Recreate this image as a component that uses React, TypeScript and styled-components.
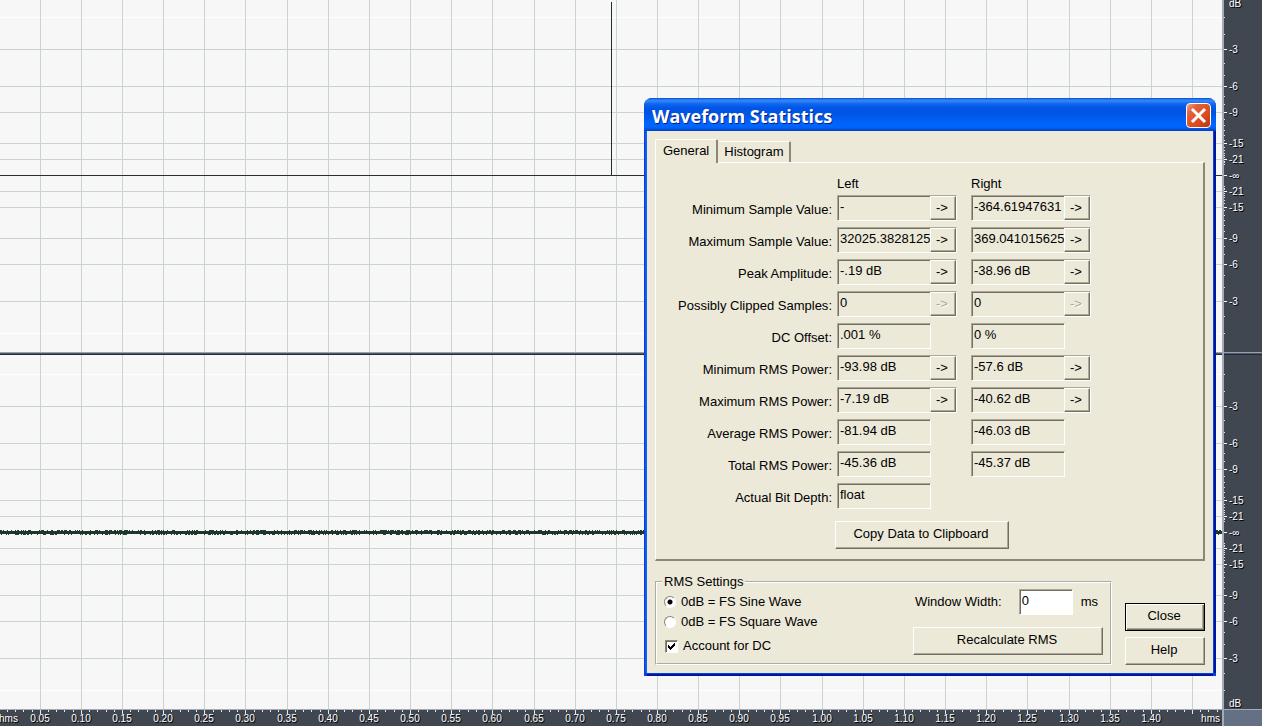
import React, { useEffect, useState } from "react";
import styled, { createGlobalStyle, css } from "styled-components";

const GlobalStyle = createGlobalStyle`
  * { box-sizing: border-box; }
  body {
    margin: 0;
    background: #f7f7f7;
    color: #000;
    font: 13px/16px "Liberation Sans", Arial, sans-serif;
  }
  button, input { font: inherit; color: inherit; }
`;

/* ---------- Editor behind the dialog ---------- */

const Editor = styled.main`
  position: relative;
  display: grid;
  grid-template-columns: minmax(0, 1fr) 40px;
  grid-template-rows: minmax(0, 1fr) 17px;
  min-height: 100vh;
  overflow: hidden;
`;

const Tracks = styled.div`
  display: flex;
  flex-direction: column;
`;

const Scales = styled(Tracks)`
  background: #404750;
  border-left: 2px solid #a4abb6;
`;

const TrackSplitter = styled.div`
  flex: none;
  height: 3px;
  background: #4f5a6c;
  border-top: 1px solid #98a1b0;
  border-bottom: 1px solid #262b33;
`;

const TrackDrawing = styled.svg<{ $tall?: boolean }>`
  display: block;
  width: 100%;
  flex: 1 1 ${(p) => (p.$tall ? 354 : 352)}px;
  min-height: 0;
  overflow: hidden;
`;

const TimeRuler = styled.svg`
  display: block;
  width: 100%;
  height: 17px;
  background: #404750;
  border-top: 1px solid #a4abb6;
`;

const Corner = styled.div`
  background: #667084;
  border: solid #a4abb6;
  border-width: 1px 0 0 2px;
`;

const ScaleText = styled.text`
  font: 10px "Liberation Sans", Arial, sans-serif;
  fill: #fff;
  text-shadow: 1px 1px 0 #000;
`;

const FULL_SCALE = 177.4;
const TIME_STEP = 41.151;
const TIME_START = -0.92;
const SCALE_WIDTH = 40;
const MAJOR_DB = [3, 6, 9, 15, 21];
const offsetOf = (db: number) => Math.round(FULL_SCALE * Math.pow(10, -db / 20));
const timeX = (n: number) => Math.floor(TIME_START + n * TIME_STEP);
const range = (n: number) => Array.from({ length: n }, (_, i) => i);

const useTrackWidth = () => {
  const [width, setWidth] = useState(window.innerWidth - SCALE_WIDTH);
  useEffect(() => {
    const update = () => setWidth(window.innerWidth - SCALE_WIDTH);
    window.addEventListener("resize", update);
    return () => window.removeEventListener("resize", update);
  }, []);
  return width;
};

const noisePath = (centre: number, width: number) => {
  let seed = 7;
  const next = () => (seed = (seed * 16807) % 2147483647) / 2147483647;
  return range(width)
    .map((x) => {
      const up = next() < 0.45 ? 2 : 1;
      const down = next() < 0.35 ? 3 : 2;
      return `M${x + 0.5} ${centre - up}V${centre + down}`;
    })
    .join("");
};

function Track({ centre, width, lower }: { centre: number; width: number; lower?: boolean }) {
  return (
    <TrackDrawing $tall={lower} aria-hidden="true" shapeRendering="crispEdges">
      {[1, -1].map((s) => (
        <rect key={s} x="0" y={centre - s * offsetOf(1)} width="100%" height="1" fill="#fff" />
      ))}
      {range(Math.floor(width / TIME_STEP)).map((n) => (
        <rect key={n} x={timeX(n + 1)} y="0" width="1" height="100%" fill="#c9d4ca" />
      ))}
      {MAJOR_DB.flatMap((db) => [-offsetOf(db), offsetOf(db)]).map((o) => (
        <rect key={o} x="0" y={centre + o} width="100%" height="1" fill="#c9d4ca" />
      ))}
      {lower ? (
        <>
          <path d={noisePath(centre, width)} stroke="#1b4230" />
          <rect x="0" y={centre - 1} width="100%" height="3" fill="#22352a" />
        </>
      ) : (
        <>
          <rect x="0" y={centre} width="100%" height="1" fill="#2c302a" />
          <rect x="611" y="2" width="1" height={centre - 2} fill="#1d2e2a" />
        </>
      )}
    </TrackDrawing>
  );
}

function Scale({ centre, lower }: { centre: number; lower?: boolean }) {
  return (
    <TrackDrawing $tall={lower} shapeRendering="crispEdges">
      {range(24).flatMap((i) =>
        [-1, 1].map((s) => (
          <rect key={`${i}${s}`} x="0" y={centre + s * offsetOf(i + 1)} width="1" height="1" fill="#e4e6ea" />
        ))
      )}
      {MAJOR_DB.flatMap((db) =>
        [-1, 1].map((s) => (
          <g key={`${db}${s}`}>
            <rect x="0" y={centre + s * offsetOf(db)} width="3" height="1" fill="#fff" />
            <ScaleText x="5" y={centre + s * offsetOf(db) + 4}>{`-${db}`}</ScaleText>
          </g>
        ))
      )}
      <rect x="0" y={centre} width="3" height="1" fill="#fff" />
      <ScaleText x="5" y={centre + 4}>-∞</ScaleText>
      <ScaleText x="5" y={lower ? 352 : 7}>dB</ScaleText>
    </TrackDrawing>
  );
}

function Ruler({ width }: { width: number }) {
  return (
    <TimeRuler shapeRendering="crispEdges">
      {range(Math.floor((width * 5) / TIME_STEP) + 1).map((i) => (
        <rect key={i} x={timeX(i / 5)} y="0" width="1" height={i % 5 ? 2 : 4} fill="#e8eaee" />
      ))}
      {range(Math.floor((width - SCALE_WIDTH) / TIME_STEP)).map((n) => (
        <ScaleText key={n} x={timeX(n + 1)} y="12" textAnchor="middle">
          {((n + 1) * 0.05).toFixed(2)}
        </ScaleText>
      ))}
      <ScaleText x="-1" y="12">hms</ScaleText>
      <ScaleText x="100%" dx="-2" y="12" textAnchor="end">hms</ScaleText>
    </TimeRuler>
  );
}

/* ---------- Dialog ---------- */

const Dialog = styled.section`
  position: absolute;
  left: 644px;
  top: 98px;
  width: 572px;
  background: #0a3fe0;
  border-radius: 8px 8px 0 0;
  overflow: hidden;
`;

const TitleBar = styled.header`
  display: flex;
  align-items: center;
  justify-content: space-between;
  height: 33px;
  padding: 2px 5px 0 8px;
  background: linear-gradient(
    #0a4ad0 0, #2f86fa 2px, #2f86fa 3px, #0f66ee 6px, #0055e6 10px,
    #0054e3 15px, #0062fa 24px, #0066ff 29px, #005cf0 30px, #0040c4 33px
  );
`;

const Title = styled.h1`
  margin: 0;
  color: #fff;
  font: bold 18px/24px "Open Sans", "Trebuchet MS", sans-serif;
  text-shadow: 1px 1px 0 #0b1f86;
`;

const CloseBox = styled.button`
  display: grid;
  place-items: center;
  width: 25px;
  height: 25px;
  padding: 0;
  border: 1px solid #fff;
  border-radius: 4px;
  background: linear-gradient(135deg, #f0a088 0, #e2603c 25%, #dd4a1e 65%, #b83410 100%);
`;

const DialogBody = styled.div`
  margin: 0 3px 3px;
  padding: 8px;
  background: #ece9d8;
  box-shadow: -1px 0 0 #1560f0, -2px 0 0 #0a58f0, 1px 0 0 #0a3fe0, 3px 0 0 #0016a0,
    0 1px 0 #0a3fe0, 0 3px 0 #0016a0;
`;

const TabList = styled.div`
  display: flex;
  align-items: flex-end;
  height: 23px;
`;

const Tab = styled.button<{ $active: boolean }>`
  height: 21px;
  padding: 0 5px;
  border: solid;
  border-width: 1px 2px 0 1px;
  border-color: #fff #8a8778 #fff #fff;
  border-radius: 2px 2px 0 0;
  background: #ece9d8;
  ${(p) =>
    p.$active
      ? css`
          position: relative;
          height: 24px;
          margin-bottom: -1px;
          padding: 0 7px 2px;
        `
      : css`
          border-left-color: #ece9d8;
        `}
`;

const Panel = styled.div`
  padding: 12px 0 10px;
  border: solid;
  border-width: 1px 2px 2px 1px;
  border-color: #fff #8a8778 #8a8778 #fff;
`;

const StatsTable = styled.table`
  border-collapse: collapse;

  th, td {
    padding: 0 0 6px;
    vertical-align: top;
    font-weight: normal;
    text-align: left;
  }
  thead th { padding: 1px 0 3px; }
`;

const RowHead = styled.th`
  width: 181px;
  && {
    padding: 7px 5px 0 0;
    text-align: right;
  }
`;

const StatCell = styled.td`
  width: 134px;
`;

const SunkenFrame = styled.div`
  display: inline-flex;
  height: 26px;
  vertical-align: top;
  border: 1px solid;
  border-color: #aca899 #fff #fff #aca899;
`;

const ValueBox = styled.input<{ $editable?: boolean }>`
  width: ${(p) => (p.$editable ? 52 : 92)}px;
  height: 24px;
  padding: 0 0 4px 1px;
  border: solid #716f64;
  border-width: 1px 0 0 1px;
  border-radius: 0;
  background: ${(p) => (p.$editable ? "#fff" : "#ece9d8")};
  outline: none;
`;

const PushButton = styled.button<{ $width: number; $default?: boolean }>`
  width: ${(p) => p.$width}px;
  height: 28px;
  padding: 0 2px 2px 0;
  border: 1px solid;
  border-color: #fff #716f64 #716f64 #fff;
  background: #ece9d8;
  box-shadow: inset -1px -1px 0 #aca899;
  ${(p) =>
    p.$default &&
    css`
      border-color: #000;
      box-shadow: inset 1px 1px 0 #fff, inset -1px -1px 0 #716f64, inset -2px -2px 0 #aca899;
    `}
`;

const JumpButton = styled(PushButton)`
  height: 24px;
  padding-bottom: 0;
  &:disabled {
    color: #aca899;
    text-shadow: 1px 1px 0 #fff;
  }
`;

const CopyRow = styled.div`
  margin: 6px 0 0 179px;
`;

const Footer = styled.div`
  display: flex;
  justify-content: space-between;
  align-items: flex-end;
  margin-top: 14px;
`;

const Settings = styled.fieldset`
  display: flex;
  justify-content: space-between;
  width: 457px;
  height: 90px;
  margin: 0;
  padding: 0 7px;
  border: 2px groove #fff;

  legend {
    margin-left: -2px;
    padding: 0 2px;
    line-height: 14px;
  }
`;

const Choices = styled.div`
  display: flex;
  flex-direction: column;
  gap: 4px;
  padding-top: 5px;
`;

const Choice = styled.label`
  display: flex;
  align-items: center;
  gap: 5px;
  height: 16px;
`;

const CheckChoice = styled(Choice)`
  margin-top: 4px;
  padding-left: 1px;
`;

const Radio = styled.input`
  appearance: none;
  width: 12px;
  height: 12px;
  margin: 0;
  border: 1px solid;
  border-color: #8a8778 #fff #fff #8a8778;
  border-radius: 50%;
  background: #fff;
  &:checked { background: radial-gradient(circle, #000 2px, #fff 3px); }
`;

const CheckHolder = styled.span`
  display: grid;
  > * { grid-area: 1 / 1; }
  svg { visibility: hidden; pointer-events: none; }
  input:checked + svg { visibility: visible; }
`;

const CheckBox = styled.input`
  appearance: none;
  width: 13px;
  height: 13px;
  margin: 0;
  border: 1px solid;
  border-color: #8a8778 #fff #fff #8a8778;
  background: #fff;
  box-shadow: inset 1px 1px 0 #716f64;
`;

const WindowControls = styled.div`
  display: flex;
  flex-direction: column;
  align-items: flex-end;
  gap: 12px;
`;

const WidthRow = styled.div`
  display: flex;
  align-items: center;
  padding-right: 5px;
  label { margin-right: 17px; }
  span { margin-left: 8px; }
`;

const Actions = styled.div`
  display: flex;
  flex-direction: column;
  gap: 6px;
`;

type Jump = "on" | "off" | "none";
const STATS: { name: string; left: string; right?: string; jump: Jump }[] = [
  { name: "Minimum Sample Value", left: "-", right: "-364.61947631", jump: "on" },
  { name: "Maximum Sample Value", left: "32025.3828125", right: "369.041015625", jump: "on" },
  { name: "Peak Amplitude", left: "-.19 dB", right: "-38.96 dB", jump: "on" },
  { name: "Possibly Clipped Samples", left: "0", right: "0", jump: "off" },
  { name: "DC Offset", left: ".001 %", right: "0 %", jump: "none" },
  { name: "Minimum RMS Power", left: "-93.98 dB", right: "-57.6 dB", jump: "on" },
  { name: "Maximum RMS Power", left: "-7.19 dB", right: "-40.62 dB", jump: "on" },
  { name: "Average RMS Power", left: "-81.94 dB", right: "-46.03 dB", jump: "none" },
  { name: "Total RMS Power", left: "-45.36 dB", right: "-45.37 dB", jump: "none" },
  { name: "Actual Bit Depth", left: "float", jump: "none" },
];

function Stat({ label, value, jump }: { label: string; value: string; jump: Jump }) {
  return (
    <SunkenFrame>
      <ValueBox readOnly value={value} aria-label={label} />
      {jump !== "none" && (
        <JumpButton type="button" $width={26} disabled={jump === "off"}>
          -&gt;
        </JumpButton>
      )}
    </SunkenFrame>
  );
}

function StatisticsDialog() {
  const [wave, setWave] = useState("sine");
  const [dc, setDc] = useState(true);
  const [width, setWidth] = useState("0");

  return (
    <Dialog role="dialog" aria-labelledby="dialog-title">
      <TitleBar>
        <Title id="dialog-title">Waveform Statistics</Title>
        <CloseBox type="button" aria-label="Close window">
          <svg width="17" height="17" viewBox="0 0 17 17" stroke="#fff" strokeWidth="3">
            <path d="M2 2L15 15M15 2L2 15" />
          </svg>
        </CloseBox>
      </TitleBar>
      <DialogBody>
        <TabList role="tablist">
          <Tab type="button" role="tab" aria-selected="true" $active>General</Tab>
          <Tab type="button" role="tab" aria-selected="false" $active={false}>Histogram</Tab>
        </TabList>
        <Panel role="tabpanel">
          <StatsTable>
            <thead>
              <tr>
                <td />
                <th scope="col">Left</th>
                <th scope="col">Right</th>
              </tr>
            </thead>
            <tbody>
              {STATS.map((s) => (
                <tr key={s.name}>
                  <RowHead scope="row">{s.name}:</RowHead>
                  <StatCell>
                    <Stat label={`${s.name}, left`} value={s.left} jump={s.jump} />
                  </StatCell>
                  <StatCell>
                    {s.right !== undefined && (
                      <Stat label={`${s.name}, right`} value={s.right} jump={s.jump} />
                    )}
                  </StatCell>
                </tr>
              ))}
            </tbody>
          </StatsTable>
          <CopyRow>
            <PushButton type="button" $width={174}>Copy Data to Clipboard</PushButton>
          </CopyRow>
        </Panel>
        <Footer>
          <Settings>
            <legend>RMS Settings</legend>
            <Choices>
              <Choice>
                <Radio type="radio" name="wave" checked={wave === "sine"} onChange={() => setWave("sine")} />
                0dB = FS Sine Wave
              </Choice>
              <Choice>
                <Radio type="radio" name="wave" checked={wave === "square"} onChange={() => setWave("square")} />
                0dB = FS Square Wave
              </Choice>
              <CheckChoice>
                <CheckHolder>
                  <CheckBox type="checkbox" checked={dc} onChange={(e) => setDc(e.target.checked)} />
                  <svg width="13" height="13" viewBox="0 0 13 13" shapeRendering="crispEdges">
                    <path d="M3 5L5 7L10 2V5L5 10L3 8Z" fill="#000" />
                  </svg>
                </CheckHolder>
                Account for DC
              </CheckChoice>
            </Choices>
            <WindowControls>
              <WidthRow>
                <label htmlFor="window-width">Window Width:</label>
                <SunkenFrame>
                  <ValueBox id="window-width" $editable value={width} onChange={(e) => setWidth(e.target.value)} />
                </SunkenFrame>
                <span>ms</span>
              </WidthRow>
              <PushButton type="button" $width={190}>Recalculate RMS</PushButton>
            </WindowControls>
          </Settings>
          <Actions>
            <PushButton type="button" $width={80} $default>Close</PushButton>
            <PushButton type="button" $width={80}>Help</PushButton>
          </Actions>
        </Footer>
      </DialogBody>
    </Dialog>
  );
}

export default function App() {
  const trackWidth = useTrackWidth();
  return (
    <>
      <GlobalStyle />
      <Editor>
        <Tracks>
          <Track centre={175} width={trackWidth} />
          <TrackSplitter />
          <Track centre={177} width={trackWidth} lower />
        </Tracks>
        <Scales>
          <Scale centre={175} />
          <TrackSplitter />
          <Scale centre={177} lower />
        </Scales>
        <Ruler width={trackWidth} />
        <Corner />
        <StatisticsDialog />
      </Editor>
    </>
  );
}
